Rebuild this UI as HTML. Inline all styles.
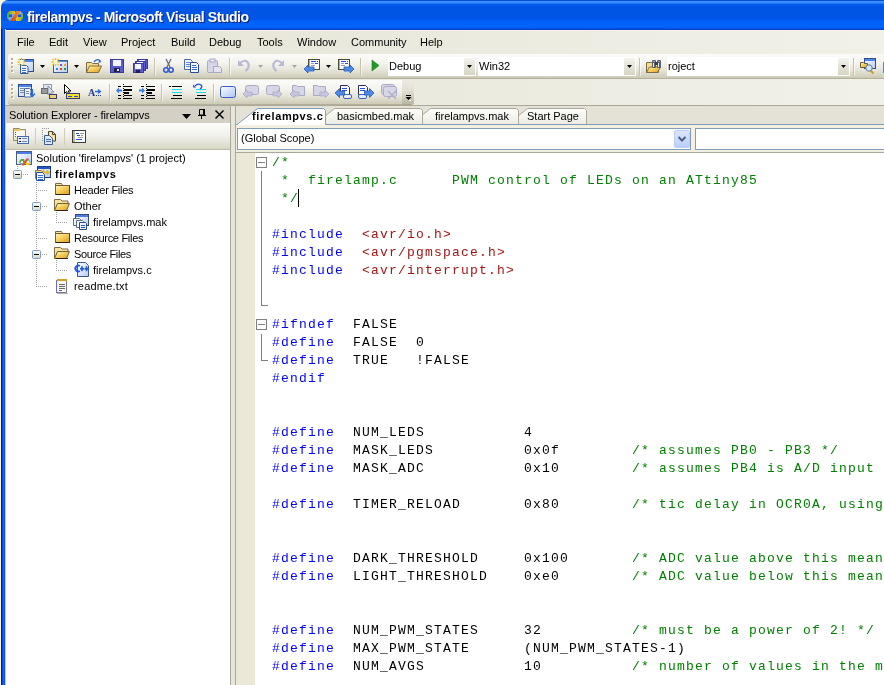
<!DOCTYPE html>
<html><head><meta charset="utf-8">
<style>
*{margin:0;padding:0;box-sizing:border-box}
html,body{width:884px;height:685px;overflow:hidden;background:#fbf8dc;font-family:"Liberation Sans",sans-serif;font-size:11px;color:#000}
.a{position:absolute;will-change:transform}
#title{left:1px;top:0;width:883px;height:30px;border-top-left-radius:7px;
 background:linear-gradient(#0050d8 0px,#0050d8 1px,#4090ff 1px,#3a8cff 3px,#0860f0 4px,#0055e5 6px,#0055e5 19px,#0062f8 21px,#0062f8 28px,#0040c8 29px,#0040c8 30px)}
#ttext{left:27px;top:9px;font-weight:bold;font-size:14px;letter-spacing:-0.45px;color:#fff;text-shadow:1px 1px 0 #0a1e80;white-space:pre;line-height:17px}
#lframe{left:0;top:29px;width:6px;height:656px;background:linear-gradient(90deg,#fbf8dc 0,#fbf8dc 1px,#0012d4 1px,#0012d4 2px,#0a44e4 2px,#0a44e4 3px,#1a6af2 3px,#1a6af2 4px,#0a52de 4px,#0a52de 5px,#d2ccb8 5px,#d2ccb8 6px)}
#menu{left:5px;top:30px;width:879px;height:76px;background:linear-gradient(90deg,#e4e3d5,#f2f1e8);border-top:1px solid #f8f6ea;border-bottom:1px solid #aca899}
.mi{top:36px;white-space:pre;line-height:13px}
.tb{border-radius:3px;background:linear-gradient(#fbfbf9 0%,#f5f4ee 35%,#e8e6da 65%,#cdcbb6 100%);box-shadow:0 1px 0 #b2b09a}
#extitle{left:6px;top:106px;width:224px;height:17px;background:#d4d0c6}
#extb{left:6px;top:123px;width:224px;height:27px;background:linear-gradient(#fdfdfb 0%,#f1f0ea 50%,#d8d6c4 100%);border-bottom:1px solid #bdbaa6}
#tree{left:6px;top:150px;width:224px;height:535px;background:#fff}
.tr{white-space:pre;line-height:13px}
#split{left:230px;top:106px;width:6px;height:580px;background:linear-gradient(90deg,#aca899 0,#aca899 1px,#e7e6dc 1px,#e7e6dc 5px,#aca899 5px,#aca899 6px)}
#tabs{left:236px;top:106px;width:648px;height:19px;background:#e4e2d6;border-bottom:1px solid #7f9db9}
#scope{left:236px;top:125px;width:648px;height:27px;background:#f3f0e1}
#margin{left:236px;top:152px;width:19px;height:533px;background:#ebe8d8;border-top:1px solid #aca899}
#code{left:255px;top:152px;width:629px;height:533px;background:#fff;border-top:1px solid #aca899}
.ln{left:272px;font-family:"Liberation Mono",monospace;font-size:13px;letter-spacing:1.2px;line-height:18px;white-space:pre;height:18px}
.k{color:#0000ff}.c{color:#008000}.s{color:#a31515}
</style></head><body>
<div id="title" class="a"></div>
<svg class="a" style="left:0;top:0" width="30" height="30">
<defs><linearGradient id="lg1" x1="0" y1="0" x2="1" y2="0"><stop offset="0" stop-color="#58a832"/><stop offset="1" stop-color="#f8c81c"/></linearGradient>
<linearGradient id="lg2" x1="0" y1="0" x2="1" y2="0"><stop offset="0" stop-color="#f8c81c"/><stop offset="1" stop-color="#78b838"/></linearGradient>
<linearGradient id="lg3" x1="0" y1="1" x2="1" y2="0"><stop offset="0" stop-color="#e83a1c"/><stop offset="1" stop-color="#f88a2c"/></linearGradient></defs>
<path d="M7 14 L9.5 11 L15 11 L16 14 Z" fill="url(#lg1)"/>
<path d="M7 14 L16 14 L16 18 L14 21 L10 21 L7 18 Z" fill="#6aaee0"/>
<path d="M7 14 L8.5 12.5 L10 17 L7 18 Z" fill="#58a832"/>
<path d="M15 14 L16.5 11 L20.5 11 L23 14 Z" fill="#7cbce8"/>
<path d="M15 14 L23 14 L23 18 L20.5 21 L16 21 L15 18 Z" fill="url(#lg2)"/>
<path d="M21 13 L23 14 L23 18 L21 20 Z" fill="#78b838"/>
<path d="M9 14.5 h3 v2.5 h-3 z" fill="#0a5ae6"/>
<path d="M18 14.5 h3 v2.5 h-3 z" fill="#0a5ae6"/>
<path d="M10 21 L17 11 L21 11 L14 21 Z" fill="url(#lg3)"/>
</svg>
<div id="ttext" class="a">firelampvs - Microsoft Visual Studio</div>
<div id="lframe" class="a"></div>
<div id="menu" class="a"></div>
<div class="a mi" style="left:17px">File</div>
<div class="a mi" style="left:49px">Edit</div>
<div class="a mi" style="left:83px">View</div>
<div class="a mi" style="left:121px">Project</div>
<div class="a mi" style="left:171px">Build</div>
<div class="a mi" style="left:209px">Debug</div>
<div class="a mi" style="left:257px">Tools</div>
<div class="a mi" style="left:297px">Window</div>
<div class="a mi" style="left:351px">Community</div>
<div class="a mi" style="left:420px">Help</div>

<!-- toolbar 1 -->
<div class="a tb" style="left:8px;top:54px;width:890px;height:24px"></div>
<div class="a tb" style="left:8px;top:80px;width:395px;height:24px;border-radius:3px 0 0 3px"></div>
<div class="a" style="left:402px;top:80px;width:12px;height:24px;border-radius:0 3px 3px 0;background:linear-gradient(#eceae2 0%,#e2e0d4 45%,#b8b6a0 100%);box-shadow:0 1px 0 #a8a690"></div>
<svg class="a" style="left:0;top:0" width="884" height="110">
<defs>
 <linearGradient id="wing2" x1="0" y1="0" x2="1" y2="1"><stop offset="0" stop-color="#fff"/><stop offset="1" stop-color="#b8cdf0"/></linearGradient>
 <linearGradient id="cbg" x1="0" y1="0" x2="0" y2="1"><stop offset="0" stop-color="#f4f3ee"/><stop offset="1" stop-color="#d6d4c2"/></linearGradient>
 <linearGradient id="bmg" x1="0" y1="0" x2="1" y2="1"><stop offset="0" stop-color="#ffffff"/><stop offset="1" stop-color="#a8c4f4"/></linearGradient>
</defs>
<rect x="11" y="58" width="2" height="2" fill="#b3b19b"/><rect x="12" y="59" width="2" height="2" fill="#fff" opacity=".9"/><rect x="11" y="58" width="2" height="2" fill="#b3b19b"/><rect x="11" y="62" width="2" height="2" fill="#b3b19b"/><rect x="12" y="63" width="2" height="2" fill="#fff" opacity=".9"/><rect x="11" y="62" width="2" height="2" fill="#b3b19b"/><rect x="11" y="66" width="2" height="2" fill="#b3b19b"/><rect x="12" y="67" width="2" height="2" fill="#fff" opacity=".9"/><rect x="11" y="66" width="2" height="2" fill="#b3b19b"/><rect x="11" y="70" width="2" height="2" fill="#b3b19b"/><rect x="12" y="71" width="2" height="2" fill="#fff" opacity=".9"/><rect x="11" y="70" width="2" height="2" fill="#b3b19b"/><rect x="20.5" y="59.5" width="13" height="12" fill="url(#wing)" stroke="#2f4f8f"/><rect x="21" y="60" width="12" height="2" fill="#4f86e8"/><path d="M20.5 65.5 h6 l1.5 1.5 v6.5 h-7.5 z" fill="#eef3fd" stroke="#3a5d9c"/><rect x="22" y="68" width="4" height="1" fill="#3a6cc8"/><rect x="22" y="70" width="4" height="1" fill="#3a6cc8"/><rect x="22" y="72" width="4" height="1" fill="#3a6cc8"/><g stroke="#f0c020" stroke-width="1.3"><path d="M17.5 62.0 h8 M21.5 58.0 v8 M18.5 59.0 l6 6 M24.5 59.0 l-6 6"/></g><rect x="19.5" y="60.0" width="4" height="4" fill="#fff8c8"/><path d="M40 65 h5 l-2.5 3 z" fill="#000"/><rect x="53.5" y="60.5" width="14" height="12" fill="url(#wing)" stroke="#3a5d9c"/><rect x="54" y="61" width="13" height="1" fill="#6a8ed8"/><rect x="60" y="64" width="2" height="2" fill="#6c5bd8"/><rect x="64" y="64" width="2" height="2" fill="#f3a020"/><rect x="56" y="68" width="2" height="2" fill="#2b8ff0"/><rect x="60" y="68" width="2" height="2" fill="#f03a1a"/><rect x="64" y="68" width="2" height="2" fill="#18a030"/><g stroke="#f0c020" stroke-width="1.3"><path d="M51.5 62.0 h8 M55.5 58.0 v8 M52.5 59.0 l6 6 M58.5 59.0 l-6 6"/></g><rect x="53.5" y="60.0" width="4" height="4" fill="#fff8c8"/><path d="M74 65 h5 l-2.5 3 z" fill="#000"/><path d="M86.5 62.5 h5 l1 1 h6 v8.5 h-12 z" fill="#f6dc85" stroke="#7d6b48"/><path d="M86.5 72.5 l3 -6.5 h12 l-3 6.5 z" fill="url(#fldg)" stroke="#7d6b48"/><path d="M94 62 q3 -4 6.5 -1" fill="none" stroke="#3a6cc8" stroke-width="1.3"/><path d="M99 59.5 l2.5 2.5 l-3 1 z" fill="#3a6cc8"/><rect x="110.5" y="59.5" width="13" height="13" fill="#5b5bd0" stroke="#3a3a98"/><rect x="113" y="60" width="8" height="6" fill="#f4f4fc"/><rect x="114" y="68" width="6" height="4" fill="#22224a"/><rect x="117" y="69" width="2" height="2" fill="#e8e8f8"/><rect x="137.5" y="59.5" width="10" height="9" fill="#5b5bd0" stroke="#3a3a98"/><rect x="139" y="60" width="6" height="2" fill="#f4f4fc"/><rect x="135.5" y="61.5" width="10" height="9" fill="#5b5bd0" stroke="#3a3a98"/><rect x="137" y="62" width="6" height="2" fill="#f4f4fc"/><rect x="133.5" y="63.5" width="10" height="9" fill="#5b5bd0" stroke="#3a3a98"/><rect x="135" y="64" width="6" height="2" fill="#f4f4fc"/><rect x="135" y="66" width="6" height="3" fill="#f4f4fc"/><rect x="136" y="70" width="4" height="3" fill="#22224a"/><rect x="154" y="58" width="1" height="18" fill="#c5c2b0"/><rect x="155" y="58" width="1" height="18" fill="#fff" opacity=".6"/><path d="M166 59 L170.5 68 M171 59 L166.5 68" stroke="#6b6b78" stroke-width="1.3"/><circle cx="166" cy="70" r="2.2" fill="none" stroke="#2e5ad8" stroke-width="1.6"/><circle cx="171" cy="70" r="2.2" fill="none" stroke="#2e5ad8" stroke-width="1.6"/><path d="M184.5 59.5 h6 l2 2 v8 h-8 z" fill="#f2f6fd" stroke="#4a6aa8"/><rect x="186" y="62" width="4" height="1" fill="#5a8ae0"/><rect x="186" y="64" width="5" height="1" fill="#5a8ae0"/><rect x="186" y="66" width="5" height="1" fill="#5a8ae0"/><path d="M190.5 62.5 h6 l2 2 v8 h-8 z" fill="#f2f6fd" stroke="#2a4a98"/><rect x="192" y="65" width="4" height="1" fill="#3a6cc8"/><rect x="192" y="67" width="5" height="1" fill="#3a6cc8"/><rect x="192" y="69" width="5" height="1" fill="#3a6cc8"/><rect x="207.5" y="60.5" width="10" height="12" rx="1" fill="#d6d6e6" stroke="#a9a9c6"/><rect x="210" y="59" width="5" height="3" fill="#ececf4" stroke="#a9a9c6" stroke-width="1"/><path d="M213.5 66.5 h6 l2 2 v4 h-8 z" fill="#e4e4f0" stroke="#a9a9c6"/><rect x="229" y="58" width="1" height="18" fill="#c5c2b0"/><rect x="230" y="58" width="1" height="18" fill="#fff" opacity=".6"/><path d="M240 63 q6 -5 8.5 1 q1 4 -3 7" fill="none" stroke="#b9b9d6" stroke-width="2.2"/><path d="M238 60 v6 h6 z" fill="#b9b9d6"/><path d="M258 65 h5 l-2.5 3 z" fill="#a8a898"/><path d="M282 63 q-6 -5 -8.5 1 q-1 4 3 7" fill="none" stroke="#b9b9d6" stroke-width="2.2"/><path d="M284 60 v6 h-6 z" fill="#b9b9d6"/><path d="M292 65 h5 l-2.5 3 z" fill="#a8a898"/><rect x="308.5" y="59.5" width="11" height="10" fill="#fff" stroke="#4a4a3a"/><rect x="309" y="60" width="1" height="9" fill="#b5b09a"/><rect x="311" y="61" width="5" height="1" fill="#1f4fe0"/><rect x="317" y="61" width="1" height="1" fill="#1f4fe0"/><rect x="311" y="63" width="3" height="1" fill="#9a9a9a"/><rect x="315" y="63" width="3" height="1" fill="#1f4fe0"/><rect x="311" y="65" width="4" height="1" fill="#9a9a9a"/><path d="M304 69 l4 -4 v2 h6 v4 h-6 v2 z" fill="#4d8ae8" stroke="#2a5ab8" stroke-width=".8"/><path d="M326 65 h5 l-2.5 3 z" fill="#000"/><rect x="338.5" y="59.5" width="11" height="10" fill="#fff" stroke="#4a4a3a"/><rect x="339" y="60" width="1" height="9" fill="#b5b09a"/><rect x="341" y="61" width="5" height="1" fill="#1f4fe0"/><rect x="347" y="61" width="1" height="1" fill="#1f4fe0"/><rect x="341" y="63" width="3" height="1" fill="#9a9a9a"/><rect x="345" y="63" width="3" height="1" fill="#1f4fe0"/><rect x="341" y="65" width="4" height="1" fill="#9a9a9a"/><path d="M354 69 l-4 -4 v2 h-6 v4 h6 v2 z" fill="#4d8ae8" stroke="#2a5ab8" stroke-width=".8"/><rect x="360" y="58" width="1" height="18" fill="#c5c2b0"/><rect x="361" y="58" width="1" height="18" fill="#fff" opacity=".6"/><path d="M372 60 L379 65.5 L372 71 z" fill="#1f9a2a" stroke="#157a1c" stroke-width=".6"/><rect x="388" y="57" width="88" height="19" fill="#fff"/><rect x="464" y="58" width="11" height="17" fill="url(#cbg)"/><path d="M467 65 h5 l-2.5 3 z" fill="#000"/><rect x="478" y="57" width="158" height="19" fill="#fff"/><rect x="624" y="58" width="11" height="17" fill="url(#cbg)"/><path d="M627 65 h5 l-2.5 3 z" fill="#000"/><rect x="639" y="58" width="1" height="18" fill="#c5c2b0"/><rect x="640" y="58" width="1" height="18" fill="#fff" opacity=".6"/><path d="M646.5 62.5 h5 l1 1 h6 v9 h-12 z" fill="#f6dc85" stroke="#7d6b48"/><path d="M646.5 72.5 l3 -5.5 h11 l-3 5.5 z" fill="url(#fldg)" stroke="#7d6b48"/><rect x="652" y="60" width="4" height="8" rx="1" fill="#5a606c"/><rect x="657" y="60" width="4" height="8" rx="1" fill="#5a606c"/><rect x="655" y="62" width="3" height="3" fill="#3a3f4a"/><rect x="653" y="63" width="1" height="4" fill="#e8ecf4"/><rect x="658" y="63" width="1" height="4" fill="#e8ecf4"/><rect x="653" y="61" width="2" height="1" fill="#9aa0ac"/><rect x="658" y="61" width="2" height="1" fill="#9aa0ac"/><rect x="667" y="57" width="183" height="19" fill="#fff"/><rect x="838" y="58" width="11" height="17" fill="url(#cbg)"/><path d="M841 65 h5 l-2.5 3 z" fill="#000"/><rect x="853" y="58" width="1" height="18" fill="#c5c2b0"/><rect x="854" y="58" width="1" height="18" fill="#fff" opacity=".6"/><rect x="864.5" y="58.5" width="11" height="10" fill="url(#wing)" stroke="#2f4f8f"/><rect x="865" y="59" width="10" height="2" fill="#4f86e8"/><path d="M860.5 62.5 h3 l1 1 h3 v4 h-7 z" fill="url(#fldg)" stroke="#6d5b38"/><path d="M870.5 70.5 l3 3" stroke="#d0a020" stroke-width="2.2"/><circle cx="869" cy="68" r="3.2" fill="#d8ecf8" stroke="#5a7aa0"/><rect x="883" y="62" width="1" height="11" fill="#4f86e8"/><rect x="12" y="85" width="2" height="2" fill="#fff" opacity=".9"/><rect x="11" y="84" width="2" height="2" fill="#b3b19b"/><rect x="12" y="89" width="2" height="2" fill="#fff" opacity=".9"/><rect x="11" y="88" width="2" height="2" fill="#b3b19b"/><rect x="12" y="93" width="2" height="2" fill="#fff" opacity=".9"/><rect x="11" y="92" width="2" height="2" fill="#b3b19b"/><rect x="12" y="97" width="2" height="2" fill="#fff" opacity=".9"/><rect x="11" y="96" width="2" height="2" fill="#b3b19b"/><rect x="18.5" y="84.5" width="13" height="12" fill="url(#wing)" stroke="#2f4f8f"/><rect x="19" y="85" width="12" height="2" fill="#4f86e8"/><rect x="20" y="88" width="4" height="1" fill="#7a8aa8"/><rect x="20" y="90" width="4" height="1" fill="#7a8aa8"/><rect x="20" y="92" width="4" height="1" fill="#7a8aa8"/><path d="M24.5 88.5 h5 l1.5 1.5 v7 h-6.5 z" fill="#f2f6fd" stroke="#4a6aa8"/><rect x="26" y="91" width="3" height="1" fill="#7a8aa8"/><rect x="26" y="93" width="3" height="1" fill="#7a8aa8"/><path d="M32.5 89 v7 M30 93.5 l2.5 3 l2.5 -3" fill="none" stroke="#2a6ae0" stroke-width="1.2"/><rect x="43.5" y="84.5" width="8" height="6" fill="#dde6f4" stroke="#9a9aa8"/><rect x="41.5" y="88.5" width="6" height="5" fill="#9a9a9a" stroke="#6a6a6a"/><path d="M48 86 v9 l2 -2 l2 3 l1 -1 l-2 -3 h3 z" fill="#d8e0ee" stroke="#7a8090" stroke-width=".8"/><rect x="49.5" y="94.5" width="7" height="4" fill="#f2d070" stroke="#3a3a6a"/><path d="M64.5 84.5 v9 l2 -2 l2 3.5 l1.5 -1 l-2 -3 h3 z" fill="#fff" stroke="#000"/><rect x="66.5" y="93.5" width="13" height="5" fill="#f4e030" stroke="#3a3a6a"/><rect x="68" y="96" width="4" height="1" fill="#2a4ad8"/><rect x="74" y="96" width="4" height="1" fill="#2a4ad8"/><text x="88" y="96" font-family="Liberation Serif" font-weight="bold" font-size="10" fill="#1f3a90">A</text><path d="M95 91.5 h5 M98 89.5 l2.5 2 l-2.5 2" fill="none" stroke="#2a6ae0" stroke-width="1.3"/><rect x="96" y="95" width="1" height="1" fill="#1f3a90"/><rect x="98" y="95" width="1" height="1" fill="#1f3a90"/><rect x="100" y="95" width="1" height="1" fill="#1f3a90"/><rect x="109" y="84" width="1" height="18" fill="#c5c2b0"/><rect x="110" y="84" width="1" height="18" fill="#fff" opacity=".6"/><g fill="#000"><rect x="118" y="86" width="3" height="1"/><rect x="124" y="86" width="8" height="1"/><rect x="118" y="95" width="3" height="1"/><rect x="124" y="95" width="8" height="1"/><rect x="118" y="98" width="3" height="1"/><rect x="124" y="98" width="8" height="1"/><rect x="124" y="89" width="8" height="2"/><rect x="124" y="92" width="5" height="2"/><rect x="123" y="84" width="1" height="1"/><rect x="123" y="86" width="1" height="1"/><rect x="123" y="88" width="1" height="1"/><rect x="123" y="90" width="1" height="1"/><rect x="123" y="92" width="1" height="1"/><rect x="123" y="94" width="1" height="1"/><rect x="123" y="96" width="1" height="1"/><rect x="123" y="98" width="1" height="1"/></g><path d="M116 90.5 l3 -3 v2 h3 v2 h-3 v2 z" fill="#3a7ae8"/><g fill="#000"><rect x="141" y="86" width="3" height="1"/><rect x="147" y="86" width="8" height="1"/><rect x="141" y="95" width="3" height="1"/><rect x="147" y="95" width="8" height="1"/><rect x="141" y="98" width="3" height="1"/><rect x="147" y="98" width="8" height="1"/><rect x="147" y="89" width="8" height="2"/><rect x="147" y="92" width="5" height="2"/><rect x="146" y="84" width="1" height="1"/><rect x="146" y="86" width="1" height="1"/><rect x="146" y="88" width="1" height="1"/><rect x="146" y="90" width="1" height="1"/><rect x="146" y="92" width="1" height="1"/><rect x="146" y="94" width="1" height="1"/><rect x="146" y="96" width="1" height="1"/><rect x="146" y="98" width="1" height="1"/></g><path d="M145 90.5 l-3 -3 v2 h-3 v2 h3 v2 z" fill="#3a7ae8"/><rect x="161" y="84" width="1" height="18" fill="#c5c2b0"/><rect x="162" y="84" width="1" height="18" fill="#fff" opacity=".6"/><rect x="169" y="86" width="2" height="1" fill="#000"/><rect x="172" y="86" width="10" height="1" fill="#000"/><rect x="172" y="89" width="10" height="1" fill="#18e0e8"/><rect x="172" y="92" width="10" height="1" fill="#18e0e8"/><rect x="173" y="95" width="9" height="1" fill="#000"/><rect x="171" y="98" width="11" height="1" fill="#000"/><path d="M195 86 q3 -3 6 -1 q2 2 -1 4" fill="none" stroke="#1f4fe0" stroke-width="1.3"/><path d="M193 84.5 l3 3 h-3 z" fill="#1f4fe0"/><rect x="196" y="89" width="10" height="1" fill="#18e0e8"/><rect x="196" y="92" width="10" height="1" fill="#18e0e8"/><rect x="197" y="95" width="9" height="1" fill="#000"/><rect x="195" y="98" width="11" height="1" fill="#000"/><rect x="213" y="84" width="1" height="18" fill="#c5c2b0"/><rect x="214" y="84" width="1" height="18" fill="#fff" opacity=".6"/><rect x="220.5" y="86.5" width="15" height="11" rx="2" fill="url(#bmg)" stroke="#3a5ec0"/><rect x="245.5" y="85.5" width="13" height="9" rx="2" fill="#d6d6e6" stroke="#a9a9c6"/><path d="M243 94 l4 -4 v2 h5 v4 h-5 v2 z" fill="#c6c6dc" stroke="#a9a9c6" stroke-width=".8"/><rect x="266.5" y="85.5" width="13" height="9" rx="2" fill="#d6d6e6" stroke="#a9a9c6"/><path d="M282 94 l-4 -4 v2 h-5 v4 h5 v2 z" fill="#c6c6dc" stroke="#a9a9c6" stroke-width=".8"/><path d="M292.5 85.5 h4 l1 1 h7 v9 h-12 z" fill="#d6d6e6" stroke="#a9a9c6"/><path d="M290 94 l4 -4 v2 h5 v4 h-5 v2 z" fill="#c6c6dc" stroke="#a9a9c6" stroke-width=".8"/><path d="M313.5 85.5 h4 l1 1 h7 v9 h-12 z" fill="#d6d6e6" stroke="#a9a9c6"/><path d="M329 94 l-4 -4 v2 h-5 v4 h5 v2 z" fill="#c6c6dc" stroke="#a9a9c6" stroke-width=".8"/><path d="M340.5 85.5 h7 l2 2 v7 h-9 z" fill="#fff" stroke="#2a2a5a"/><rect x="342" y="88" width="5" height="1" fill="#1f4fe0"/><rect x="342" y="90" width="5" height="1" fill="#1f4fe0"/><rect x="343.5" y="94.5" width="8" height="4" rx="1.5" fill="#e8f0fc" stroke="#3a5ec0"/><path d="M335 93 l4.5 -4.5 v2.5 h5 v4 h-5 v2.5 z" fill="#4d8ae8" stroke="#2a5ab8" stroke-width=".8"/><path d="M358.5 85.5 h7 l2 2 v7 h-9 z" fill="#fff" stroke="#2a2a5a"/><rect x="360" y="88" width="5" height="1" fill="#1f4fe0"/><rect x="360" y="90" width="5" height="1" fill="#1f4fe0"/><rect x="358.5" y="94.5" width="8" height="4" rx="1.5" fill="#e8f0fc" stroke="#3a5ec0"/><path d="M374 93 l-4.5 -4.5 v2.5 h-5 v4 h5 v2.5 z" fill="#4d8ae8" stroke="#2a5ab8" stroke-width=".8"/><rect x="381.5" y="84.5" width="13" height="10" rx="2" fill="#d6d6e6" stroke="#a9a9c6"/><rect x="383.5" y="86.5" width="13" height="10" rx="2" fill="#d6d6e6" stroke="#a9a9c6"/><path d="M388 91 l8 8 M396 91 l-8 8" stroke="#b0b0c8" stroke-width="1.4"/>
<rect x="406" y="95" width="5" height="1" fill="#000"/><path d="M405.5 97 h6 l-3 3 z" fill="#000"/><rect x="409" y="100" width="2" height="1" fill="#fff"/>
</svg>
<div class="a" style="left:389px;top:60px;white-space:pre;line-height:13px">Debug</div>
<div class="a" style="left:479px;top:60px;white-space:pre;line-height:13px">Win32</div>
<div class="a" style="left:668px;top:60px;white-space:pre;line-height:13px">roject</div>


<div id="extitle" class="a"></div>
<div class="a" style="left:9px;top:109px;white-space:pre;line-height:13px;letter-spacing:-0.1px">Solution Explorer - firelampvs</div>
<div id="extb" class="a"></div>
<div id="tree" class="a"></div>

<svg class="a" style="left:0;top:0" width="884" height="685">
<defs>
 <linearGradient id="exg" x1="0" y1="0" x2="0" y2="1"><stop offset="0" stop-color="#fff"/><stop offset="1" stop-color="#d8d2bd"/></linearGradient>
 <linearGradient id="fldg" x1="0" y1="0" x2="1" y2="1"><stop offset="0" stop-color="#fff6c0"/><stop offset="0.45" stop-color="#f8d060"/><stop offset="1" stop-color="#dc9a1e"/></linearGradient>
 <linearGradient id="wing" x1="0" y1="0" x2="1" y2="1"><stop offset="0" stop-color="#fff"/><stop offset="1" stop-color="#b8cdf0"/></linearGradient>
</defs>
<!-- explorer title icons -->
<path d="M182 114 h9 l-4.5 5 z" fill="#000"/>
<path d="M199.5 109.5 h4 v5.5 h-4 z" fill="none" stroke="#000"/><rect x="203" y="109" width="2" height="7" fill="#000"/><rect x="198" y="115" width="8" height="1" fill="#000"/><rect x="201" y="116" width="1" height="3" fill="#000"/>
<path d="M215.5 110.5 L223.5 118.5 M223.5 110.5 L215.5 118.5" stroke="#000" stroke-width="1.5"/>
<!-- explorer toolbar icons -->
<path d="M13.5 128.5 h6 l1 1 h5 v11 h-12 z" fill="#f3e9c0" stroke="#8f8a70"/>
<rect x="14" y="129" width="6" height="2" fill="#f1c760"/>
<rect x="14" y="131" width="11" height="6" fill="#f8f8f4"/><rect x="15" y="132" width="1" height="1" fill="#3a5aa0"/><rect x="15" y="134" width="1" height="1" fill="#3a5aa0"/><rect x="15" y="136" width="1" height="1" fill="#3a5aa0"/>
<rect x="17.5" y="136.5" width="11" height="7" fill="#e4ecfb" stroke="#4a6da8"/>
<rect x="19" y="138" width="2" height="1" fill="#222"/><rect x="22" y="138" width="5" height="1" fill="#7a8aa8"/>
<rect x="19" y="141" width="2" height="1" fill="#222"/><rect x="22" y="141" width="5" height="1" fill="#7a8aa8"/>
<rect x="35" y="128" width="1" height="17" fill="#cfccba"/>
<g fill="#9a9a9a"><rect x="42" y="128" width="1" height="1"/><rect x="44" y="128" width="1" height="1"/><rect x="46" y="128" width="1" height="1"/><rect x="48" y="128" width="1" height="1"/><rect x="42" y="130" width="1" height="1"/><rect x="42" y="132" width="1" height="1"/><rect x="42" y="134" width="1" height="1"/><rect x="42" y="136" width="1" height="1"/><rect x="42" y="138" width="1" height="1"/><rect x="42" y="140" width="1" height="1"/></g>
<path d="M48.5 131.5 h4 l3 3 v6.5 h-7 z" fill="#fbe39a" stroke="#4a4438"/><path d="M52.5 131.5 v3 h3" fill="none" stroke="#4a4438"/>
<path d="M44.5 135.5 h5 l3 3 v6 h-8 z" fill="#dfe9fb" stroke="#3a5d9c"/>
<rect x="46" y="139" width="5" height="1" fill="#3a6cc8"/><rect x="46" y="141" width="5" height="1" fill="#3a6cc8"/>
<rect x="64" y="128" width="1" height="17" fill="#cfccba"/>
<rect x="72.5" y="130.5" width="13" height="12" fill="#fff" stroke="#3c3c3c"/>
<rect x="73" y="131" width="2" height="11" fill="#b9b49c"/>
<rect x="76" y="133" width="3" height="1" fill="#1f4fe0"/><rect x="80" y="133" width="4" height="1" fill="#9a9a9a"/>
<rect x="77" y="135" width="3" height="1" fill="#1f4fe0"/><rect x="81" y="135" width="2" height="1" fill="#9a9a9a"/>
<rect x="78" y="137" width="5" height="1" fill="#9a9a9a"/>
<rect x="76" y="139" width="6" height="1" fill="#1f4fe0"/>
<!-- tree lines -->
<g fill="#a0a0a0">
<rect x="17" y="166" width="1" height="1"/><rect x="17" y="168" width="1" height="1"/>
<rect x="23" y="174" width="1" height="1"/><rect x="25" y="174" width="1" height="1"/><rect x="27" y="174" width="1" height="1"/>
<rect x="36" y="182" width="1" height="1"/><rect x="36" y="184" width="1" height="1"/><rect x="36" y="186" width="1" height="1"/><rect x="36" y="188" width="1" height="1"/><rect x="36" y="190" width="1" height="1"/><rect x="36" y="192" width="1" height="1"/><rect x="36" y="194" width="1" height="1"/><rect x="36" y="196" width="1" height="1"/><rect x="36" y="198" width="1" height="1"/><rect x="36" y="200" width="1" height="1"/><rect x="36" y="202" width="1" height="1"/><rect x="36" y="204" width="1" height="1"/><rect x="36" y="206" width="1" height="1"/><rect x="36" y="208" width="1" height="1"/><rect x="36" y="210" width="1" height="1"/><rect x="36" y="212" width="1" height="1"/><rect x="36" y="214" width="1" height="1"/><rect x="36" y="216" width="1" height="1"/><rect x="36" y="218" width="1" height="1"/><rect x="36" y="220" width="1" height="1"/><rect x="36" y="222" width="1" height="1"/><rect x="36" y="224" width="1" height="1"/><rect x="36" y="226" width="1" height="1"/><rect x="36" y="228" width="1" height="1"/><rect x="36" y="230" width="1" height="1"/><rect x="36" y="232" width="1" height="1"/><rect x="36" y="234" width="1" height="1"/><rect x="36" y="236" width="1" height="1"/><rect x="36" y="238" width="1" height="1"/><rect x="36" y="240" width="1" height="1"/><rect x="36" y="242" width="1" height="1"/><rect x="36" y="244" width="1" height="1"/><rect x="36" y="246" width="1" height="1"/><rect x="36" y="248" width="1" height="1"/><rect x="36" y="250" width="1" height="1"/><rect x="36" y="252" width="1" height="1"/><rect x="36" y="254" width="1" height="1"/><rect x="36" y="256" width="1" height="1"/><rect x="36" y="258" width="1" height="1"/><rect x="36" y="260" width="1" height="1"/><rect x="36" y="262" width="1" height="1"/><rect x="36" y="264" width="1" height="1"/><rect x="36" y="266" width="1" height="1"/><rect x="36" y="268" width="1" height="1"/><rect x="36" y="270" width="1" height="1"/><rect x="36" y="272" width="1" height="1"/><rect x="36" y="274" width="1" height="1"/><rect x="36" y="276" width="1" height="1"/><rect x="36" y="278" width="1" height="1"/><rect x="36" y="280" width="1" height="1"/><rect x="36" y="282" width="1" height="1"/><rect x="36" y="284" width="1" height="1"/><rect x="36" y="286" width="1" height="1"/>
<rect x="38" y="190" width="1" height="1"/><rect x="40" y="190" width="1" height="1"/><rect x="42" y="190" width="1" height="1"/><rect x="44" y="190" width="1" height="1"/><rect x="46" y="190" width="1" height="1"/>
<rect x="42" y="206" width="1" height="1"/><rect x="44" y="206" width="1" height="1"/><rect x="46" y="206" width="1" height="1"/>
<rect x="38" y="238" width="1" height="1"/><rect x="40" y="238" width="1" height="1"/><rect x="42" y="238" width="1" height="1"/><rect x="44" y="238" width="1" height="1"/><rect x="46" y="238" width="1" height="1"/>
<rect x="42" y="254" width="1" height="1"/><rect x="44" y="254" width="1" height="1"/><rect x="46" y="254" width="1" height="1"/>
<rect x="38" y="286" width="1" height="1"/><rect x="40" y="286" width="1" height="1"/><rect x="42" y="286" width="1" height="1"/><rect x="44" y="286" width="1" height="1"/><rect x="46" y="286" width="1" height="1"/>
<rect x="56" y="212" width="1" height="1"/><rect x="56" y="214" width="1" height="1"/><rect x="56" y="216" width="1" height="1"/><rect x="56" y="218" width="1" height="1"/><rect x="56" y="220" width="1" height="1"/><rect x="56" y="222" width="1" height="1"/><rect x="58" y="222" width="1" height="1"/><rect x="60" y="222" width="1" height="1"/><rect x="62" y="222" width="1" height="1"/><rect x="64" y="222" width="1" height="1"/><rect x="66" y="222" width="1" height="1"/>
<rect x="56" y="260" width="1" height="1"/><rect x="56" y="262" width="1" height="1"/><rect x="56" y="264" width="1" height="1"/><rect x="56" y="266" width="1" height="1"/><rect x="56" y="268" width="1" height="1"/><rect x="56" y="270" width="1" height="1"/><rect x="58" y="270" width="1" height="1"/><rect x="60" y="270" width="1" height="1"/><rect x="62" y="270" width="1" height="1"/><rect x="64" y="270" width="1" height="1"/><rect x="66" y="270" width="1" height="1"/>
</g>
<rect x="13.5" y="170.5" width="8" height="8" rx="1" fill="url(#exg)" stroke="#7b9ebd"/><rect x="15" y="174" width="5" height="1" fill="#000"/>
<rect x="32.5" y="202.5" width="8" height="8" rx="1" fill="url(#exg)" stroke="#7b9ebd"/><rect x="34" y="206" width="5" height="1" fill="#000"/>
<rect x="32.5" y="250.5" width="8" height="8" rx="1" fill="url(#exg)" stroke="#7b9ebd"/><rect x="34" y="254" width="5" height="1" fill="#000"/>
<!-- solution icon -->
<rect x="16.5" y="151.5" width="15" height="13" fill="url(#wing)" stroke="#4a5e80"/>
<rect x="17" y="152" width="14" height="2" fill="#4d7de0"/>
<path d="M19 162 L21 159 L24 159 L25 162 Z" fill="#58a832"/>
<path d="M19 162 L25 162 L24 165 L21 165 Z" fill="#6aaee0"/>
<path d="M25 162 L26 159 L29 159 L31 162 Z" fill="#7cbce8"/>
<path d="M25 162 L31 162 L29 165 L26 165 Z" fill="#f8c81c"/>
<rect x="21" y="161" width="2" height="2" fill="#fff"/><rect x="27" y="161" width="2" height="2" fill="#fff"/>
<path d="M21.5 165.5 L26.5 158.5 L29 158.5 L24 165.5 Z" fill="#e8501c"/>
<!-- project icon -->
<rect x="37.5" y="166.5" width="13" height="11" fill="url(#wing)" stroke="#1f3a80"/>
<rect x="38" y="167" width="12" height="2" fill="#2456c8"/>
<path d="M43.5 169 v6 M40.5 172 h6 M47.5 170 v5 M45 172.5 h5" stroke="#e8b818" stroke-width="1.6"/>
<path d="M35.5 170.5 h6 l1 1 v7 h-7 z" fill="#f8de80" stroke="#8c7a56"/>
<path d="M36.5 172.5 h6 l2 2 v6 h-8 z" fill="#eef3fd" stroke="#2a4a98"/>
<rect x="38" y="175" width="5" height="1" fill="#3a6cc8"/><rect x="38" y="177" width="5" height="1" fill="#3a6cc8"/><rect x="38" y="179" width="5" height="1" fill="#3a6cc8"/>
<path d="M55.5 185.5 v-2 h6 l1 2" fill="#f8e8a0" stroke="#7a6a4a"/><rect x="55.5" y="185.5" width="14" height="9" fill="url(#fldg)" stroke="#6e5e40"/><rect x="56" y="194" width="14" height="1" fill="#2a2418"/><rect x="69" y="186" width="1" height="9" fill="#3a3020" opacity=".7"/>
<path d="M54.5 210.5 v-11 h6 l1.5 1.5 h6 v2" fill="#f8e39a" stroke="#7a6a4a"/><path d="M54.5 210.5 l3 -7 h12 l-3 7 z" fill="url(#fldg)" stroke="#6e5e40"/><rect x="56" y="210" width="12" height="1" fill="#2a2418"/>
<!-- mak icon -->
<rect x="75.5" y="214.5" width="13" height="11" fill="url(#wing)" stroke="#334c7a"/>
<rect x="76" y="215" width="12" height="2" fill="#4d7de0"/>
<path d="M73.5 218.5 h6 l1 1 v6 h-7 z" fill="#eef2fb" stroke="#5a6e90"/>
<path d="M76.5 220.5 h6 l1 1 v6 h-7 z" fill="#eef2fb" stroke="#5a6e90"/>
<path d="M79.5 222.5 h6 l1 1 v6 h-7 z" fill="#eef2fb" stroke="#334c7a"/>
<rect x="81" y="225" width="4" height="1" fill="#1f4fe0"/><rect x="81" y="227" width="4" height="1" fill="#1f4fe0"/>
<path d="M55.5 233.5 v-2 h6 l1 2" fill="#f8e8a0" stroke="#7a6a4a"/><rect x="55.5" y="233.5" width="14" height="9" fill="url(#fldg)" stroke="#6e5e40"/><rect x="56" y="242" width="14" height="1" fill="#2a2418"/><rect x="69" y="234" width="1" height="9" fill="#3a3020" opacity=".7"/>
<path d="M54.5 258.5 v-11 h6 l1.5 1.5 h6 v2" fill="#f8e39a" stroke="#7a6a4a"/><path d="M54.5 258.5 l3 -7 h12 l-3 7 z" fill="url(#fldg)" stroke="#6e5e40"/><rect x="56" y="258" width="12" height="1" fill="#2a2418"/>
<!-- c++ icon -->
<path d="M77.5 262.5 h8 l3 3 v11 h-11 z" fill="url(#wing)" stroke="#3a5a8a"/>
<path d="M79.8 266 a2.9 2.9 0 1 0 0 5" fill="none" stroke="#1c5ad8" stroke-width="2"/>
<rect x="80" y="268" width="4" height="1.6" fill="#1c5ad8"/><rect x="81.2" y="266.2" width="1.6" height="5" fill="#1c5ad8"/>
<rect x="84.5" y="268" width="4" height="1.6" fill="#1c5ad8"/><rect x="85.7" y="266.2" width="1.6" height="5" fill="#1c5ad8"/>
<!-- readme icon -->
<path d="M56.5 280.5 h10 v12 h-10 z" fill="#f4f8f0" stroke="#7a7a90"/>
<rect x="56" y="280" width="1" height="13" fill="#6a6ad8"/>
<rect x="57" y="279" width="10" height="2" fill="#d0a030"/>
<rect x="59" y="284" width="6" height="1" fill="#6a6a6a"/><rect x="59" y="286" width="6" height="1" fill="#6a6a6a"/><rect x="59" y="288" width="6" height="1" fill="#6a6a6a"/><rect x="59" y="290" width="3" height="1" fill="#6a6a6a"/>
<rect x="57" y="293" width="11" height="1" fill="#b0b0b0"/>
</svg>
<div class="a tr" style="left:36px;top:152px">Solution 'firelampvs' (1 project)</div>
<div class="a tr" style="left:55px;top:168px;font-weight:bold;letter-spacing:0.65px">firelampvs</div>
<div class="a tr" style="left:74px;top:184px;letter-spacing:-0.25px">Header Files</div>
<div class="a tr" style="left:74px;top:200px">Other</div>
<div class="a tr" style="left:93px;top:216px">firelampvs.mak</div>
<div class="a tr" style="left:74px;top:232px;letter-spacing:-0.3px">Resource Files</div>
<div class="a tr" style="left:74px;top:248px;letter-spacing:-0.35px">Source Files</div>
<div class="a tr" style="left:93px;top:264px">firelampvs.c</div>
<div class="a tr" style="left:74px;top:280px;letter-spacing:0.2px">readme.txt</div>
<div id="split" class="a"></div>
<div id="tabs" class="a"></div>
<div id="scope" class="a"></div>
<div id="margin" class="a"></div>
<div id="code" class="a"></div>

<svg class="a" style="left:236px;top:104px" width="648" height="22" viewBox="236 104 648 22">
 <defs><linearGradient id="tg" x1="0" y1="0" x2="0" y2="1"><stop offset="0" stop-color="#fdfdfc"/><stop offset="1" stop-color="#ecebe3"/></linearGradient></defs>
 <path d="M507.5 124.5 L527.5 108.5 L584.5 108.5 L586.5 110.5 L586.5 124.5 Z" fill="url(#tg)" stroke="#aca899"/>
 <path d="M410.5 124.5 L430.5 108.5 L516.5 108.5 L518.5 110.5 L518.5 124.5 Z" fill="url(#tg)" stroke="#aca899"/>
 <path d="M314.5 124.5 L334.5 108.5 L420.5 108.5 L422.5 110.5 L422.5 124.5 Z" fill="url(#tg)" stroke="#aca899"/>
 <rect x="236" y="124" width="648" height="1" fill="#7f9db9"/>
 <path d="M237 124.5 L257.5 108.5 L323.5 108.5 L325.5 110.5 L325.5 124.5" fill="#fff" stroke="#7f9db9"/>
 <rect x="238" y="124" width="87" height="1" fill="#fff"/>
</svg>
<div class="a" style="left:252px;top:110px;font-weight:bold;white-space:pre;line-height:13px;letter-spacing:0.6px">firelampvs.c</div>
<div class="a" style="left:337px;top:110px;white-space:pre;line-height:13px">basicmbed.mak</div>
<div class="a" style="left:435px;top:110px;white-space:pre;line-height:13px">firelampvs.mak</div>
<div class="a" style="left:527px;top:110px;white-space:pre;line-height:13px">Start Page</div>
<div class="a" style="left:237px;top:128px;width:454px;height:22px;background:#fff;border:1px solid #7f9db9"></div>
<div class="a" style="left:241px;top:132px;white-space:pre;line-height:13px">(Global Scope)</div>
<div class="a" style="left:674px;top:130px;width:16px;height:18px;border-radius:2px;border:1px solid #b9cdf6;background:linear-gradient(#dce6fd,#bccffa)"></div>
<svg class="a" style="left:677px;top:134px" width="10" height="10"><path d="M1.5 3 L5 6.5 L8.5 3" fill="none" stroke="#4d6185" stroke-width="2"/></svg>
<div class="a" style="left:695px;top:128px;width:200px;height:22px;background:#fff;border:1px solid #7f9db9"></div>
<svg class="a" style="left:255px;top:153px" width="20" height="220">
 <rect x="1.5" y="4.5" width="10" height="10" fill="#fff" stroke="#808080"/>
 <rect x="3" y="9" width="7" height="1" fill="#808080"/>
 <rect x="6" y="18" width="1" height="135" fill="#808080"/>
 <rect x="6" y="152" width="7" height="1" fill="#808080"/>
 <rect x="1.5" y="166.5" width="10" height="10" fill="#fff" stroke="#808080"/>
 <rect x="3" y="171" width="7" height="1" fill="#808080"/>
 <rect x="6" y="181" width="1" height="27" fill="#808080"/>
 <rect x="6" y="207" width="7" height="1" fill="#808080"/>
</svg>
<div class="a" style="left:298px;top:189px;width:1px;height:18px;background:#000"></div>
<div class="a ln" style="top:154px"><span class="c">/*</span></div>
<div class="a ln" style="top:172px"><span class="c"> *  firelamp.c      PWM control of LEDs on an ATtiny85</span></div>
<div class="a ln" style="top:190px"><span class="c"> */</span></div>
<div class="a ln" style="top:226px"><span class="k">#include</span>  <span class="s">&lt;avr/io.h&gt;</span></div>
<div class="a ln" style="top:244px"><span class="k">#include</span>  <span class="s">&lt;avr/pgmspace.h&gt;</span></div>
<div class="a ln" style="top:262px"><span class="k">#include</span>  <span class="s">&lt;avr/interrupt.h&gt;</span></div>
<div class="a ln" style="top:316px"><span class="k">#ifndef</span>  FALSE</div>
<div class="a ln" style="top:334px"><span class="k">#define</span>  FALSE  0</div>
<div class="a ln" style="top:352px"><span class="k">#define</span>  TRUE   !FALSE</div>
<div class="a ln" style="top:370px"><span class="k">#endif</span></div>
<div class="a ln" style="top:424px"><span class="k">#define</span>  NUM_LEDS           4</div>
<div class="a ln" style="top:442px"><span class="k">#define</span>  MASK_LEDS          0x0f        <span class="c">/* assumes PB0 - PB3 */</span></div>
<div class="a ln" style="top:460px"><span class="k">#define</span>  MASK_ADC           0x10        <span class="c">/* assumes PB4 is A/D input</span></div>
<div class="a ln" style="top:496px"><span class="k">#define</span>  TIMER_RELOAD       0x80        <span class="c">/* tic delay in OCR0A, using</span></div>
<div class="a ln" style="top:550px"><span class="k">#define</span>  DARK_THRESHOLD     0x100       <span class="c">/* ADC value above this mean</span></div>
<div class="a ln" style="top:568px"><span class="k">#define</span>  LIGHT_THRESHOLD    0xe0        <span class="c">/* ADC value below this mean</span></div>
<div class="a ln" style="top:622px"><span class="k">#define</span>  NUM_PWM_STATES     32          <span class="c">/* must be a power of 2! */</span></div>
<div class="a ln" style="top:640px"><span class="k">#define</span>  MAX_PWM_STATE      (NUM_PWM_STATES-1)</div>
<div class="a ln" style="top:658px"><span class="k">#define</span>  NUM_AVGS           10          <span class="c">/* number of values in the mean */</span></div>
</body></html>
